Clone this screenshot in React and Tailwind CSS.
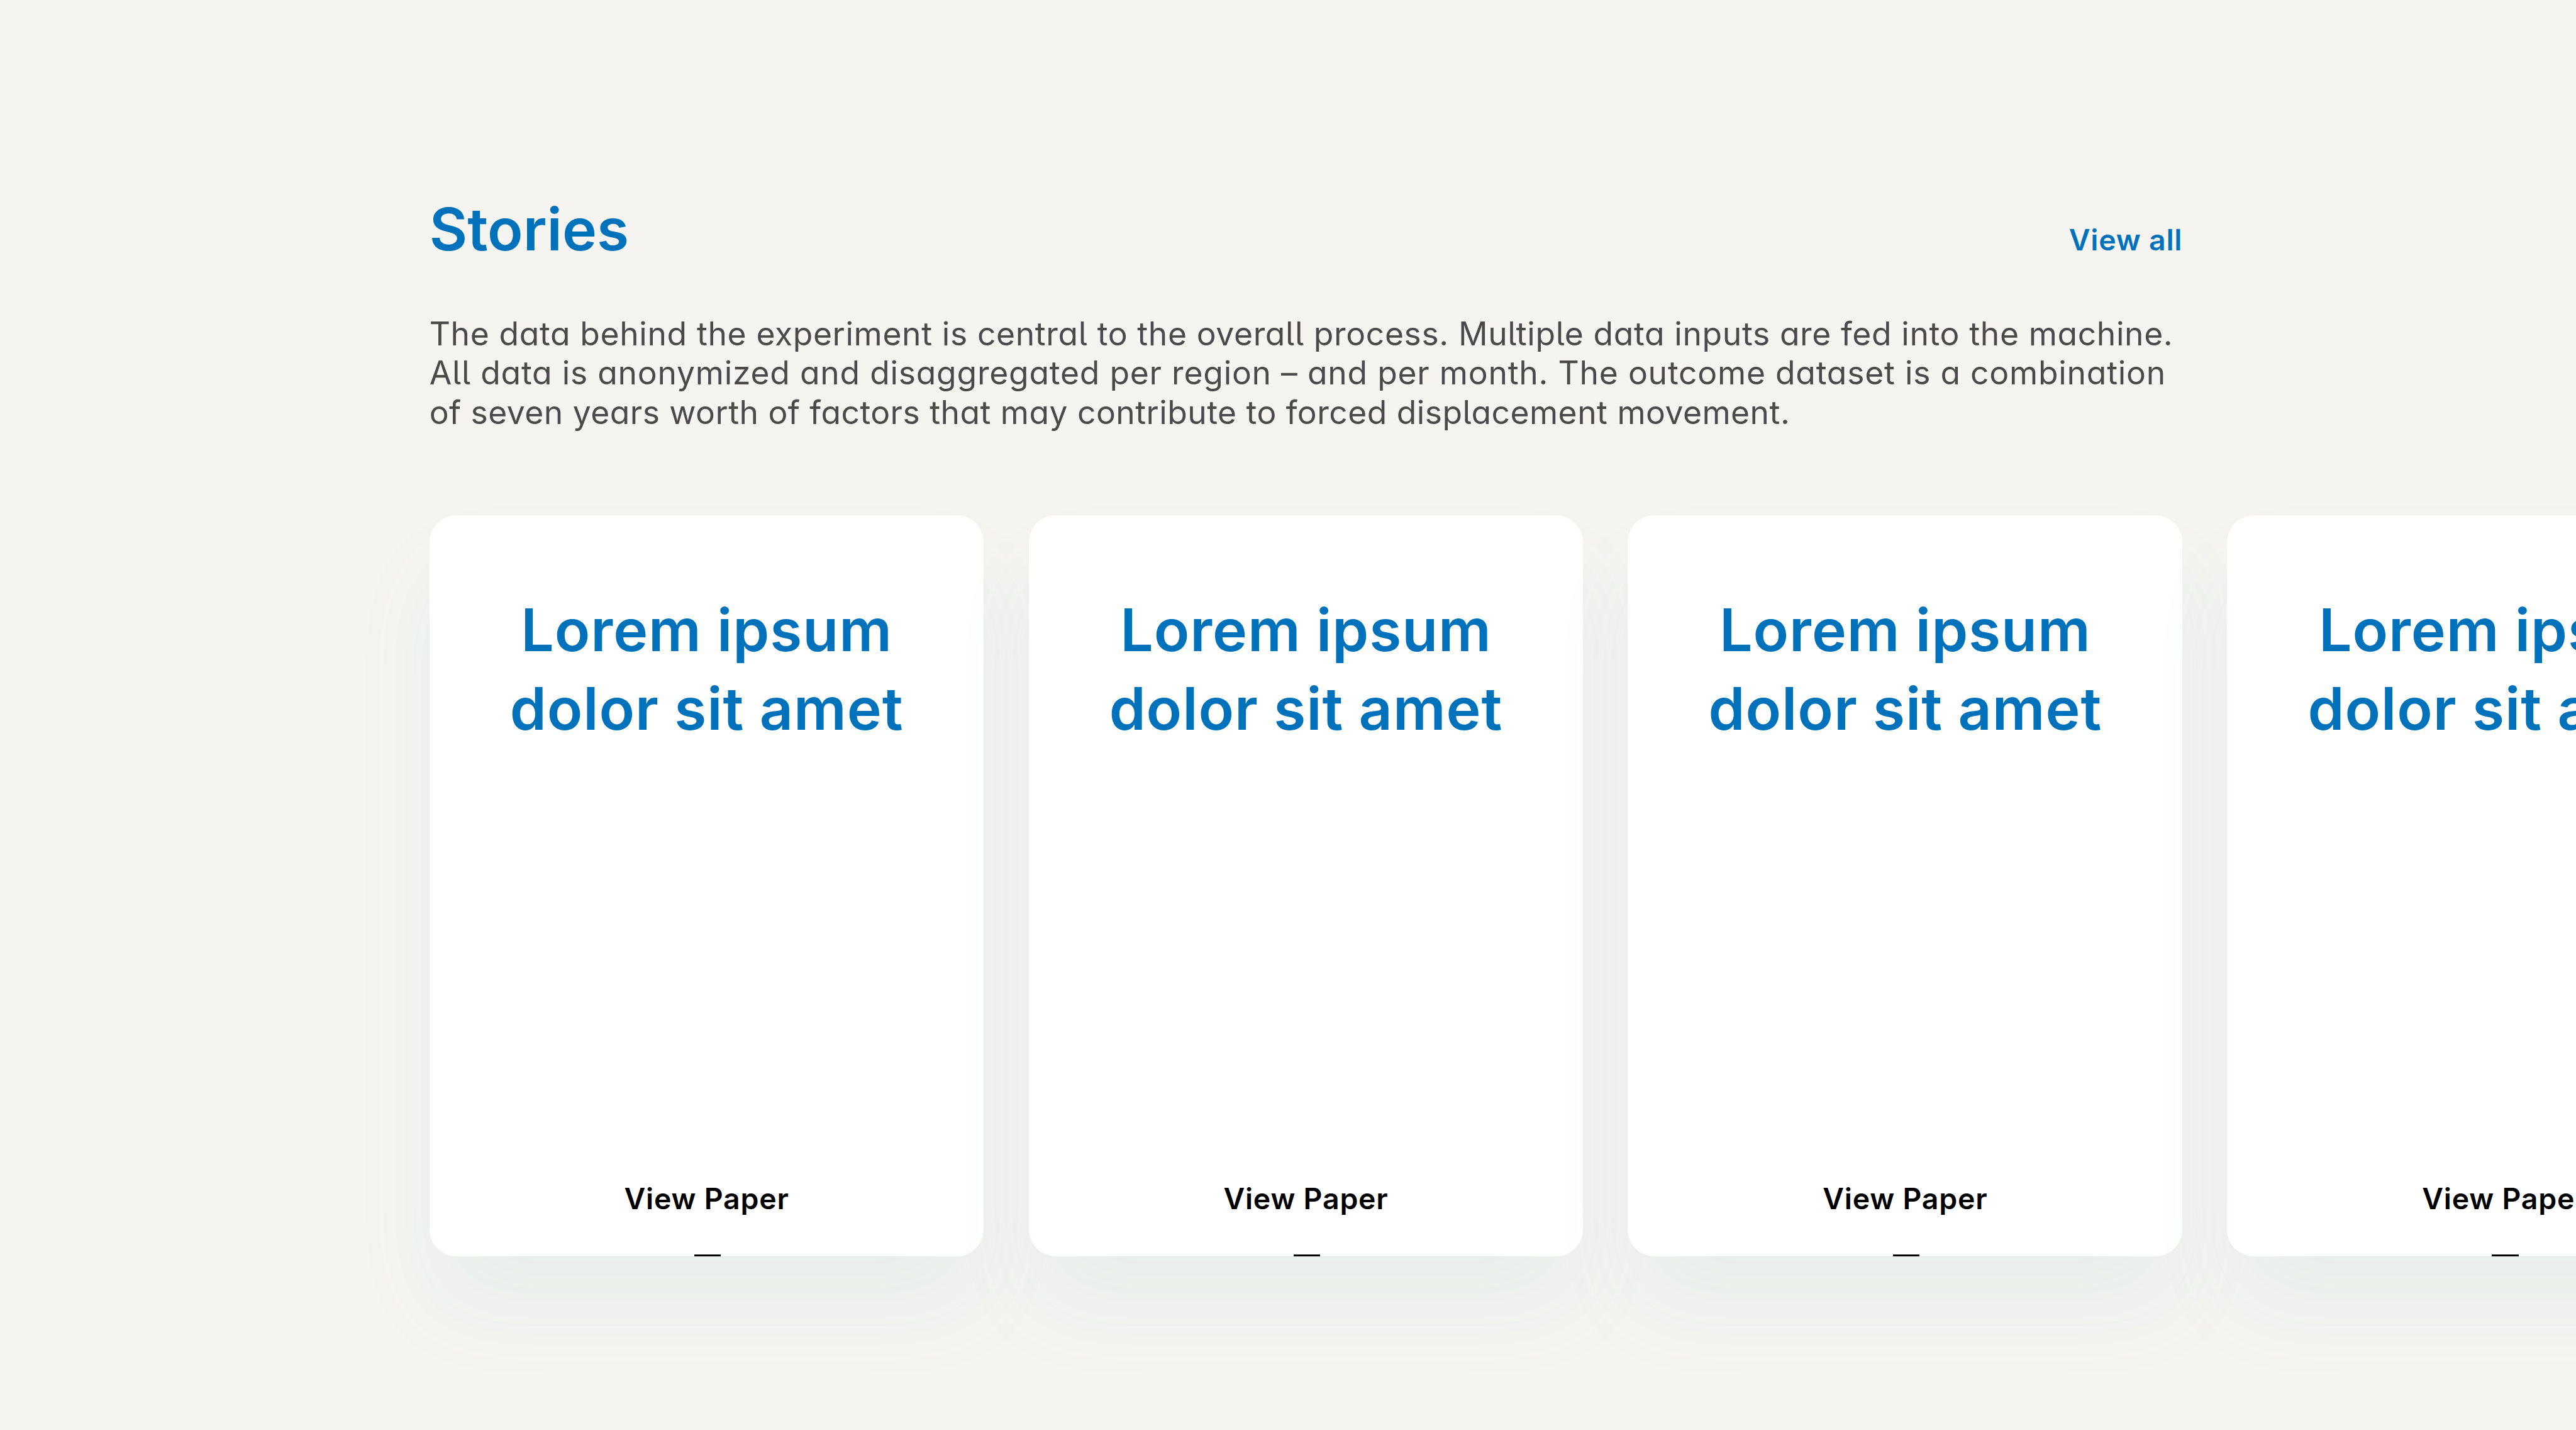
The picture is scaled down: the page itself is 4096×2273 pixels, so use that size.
const stories = [
  { id: 1, title: ['Lorem ipsum', 'dolor sit amet'], link: 'View Paper' },
  { id: 2, title: ['Lorem ipsum', 'dolor sit amet'], link: 'View Paper' },
  { id: 3, title: ['Lorem ipsum', 'dolor sit amet'], link: 'View Paper' },
  { id: 4, title: ['Lorem ipsum', 'dolor sit amet'], link: 'View Paper' },
];

const intro = [
  {
    text: 'The data behind the experiment is central to the overall process. Multiple data inputs are fed into the machine.',
    tracking: 'tracking-[0.62px]',
  },
  {
    text: 'All data is anonymized and disaggregated per region – and per month. The outcome dataset is a combination',
    tracking: 'tracking-[0.76px]',
  },
  {
    text: 'of seven years worth of factors that may contribute to forced displacement movement.',
    tracking: 'tracking-[0.46px]',
  },
];

function StoryCard({ story }) {
  return (
    <article className="flex h-[1177.6px] w-[881.8px] shrink-0 flex-col items-center rounded-[42.7px] bg-white pt-[119.7px] text-center shadow-[0_85px_142px_rgba(0,140,190,0.055)]">
      <h3 className="text-[93px] leading-[125.2px] font-semibold tracking-[0.93px] text-[#0072bc]">
        {story.title.map((line) => (
          <span key={line} className="block">{line}</span>
        ))}
      </h3>
      <a href="#" className="mt-auto mb-[59.6px] text-[46.4px] leading-[57px] font-semibold tracking-[0.8px] text-black">
        {story.link}
      </a>
      <span className="ml-[3px] h-[2.8px] w-[42.7px] bg-black" />
    </article>
  );
}

export default function App() {
  return (
    <main className="h-[2273px] w-full overflow-hidden bg-[#f5f4f0] pt-[301.8px] pl-[682.7px] font-['Inter',sans-serif]">
      <header className="flex w-[2787.6px] items-baseline justify-between text-[#0072bc]">
        <h2 className="text-[93px] leading-[125.2px] font-semibold">Stories</h2>
        <a href="#" className="text-[46.4px] font-semibold tracking-[0.8px]">View all</a>
      </header>

      {/* cv11 / cv05: single-storey a and tailed l */}
      <p className="mt-[71.9px] text-[51.6px] leading-[62.6px] whitespace-nowrap text-[#4a4a4a] [font-feature-settings:'cv11','cv05']">
        {intro.map((line) => (
          <span key={line.text} className={`block ${line.tracking}`}>{line.text}</span>
        ))}
      </p>

      <section className="mt-[132.5px] flex gap-[71.1px]">
        {stories.map((story) => (
          <StoryCard key={story.id} story={story} />
        ))}
      </section>
    </main>
  );
}
